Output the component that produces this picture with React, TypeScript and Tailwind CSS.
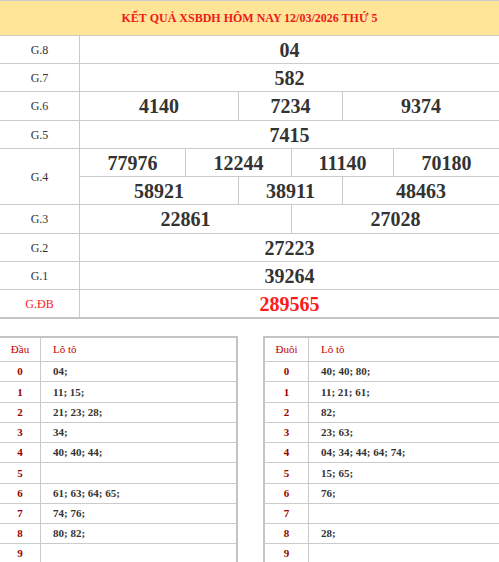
type Cell = { value: string; w: string };

function PrizeRow({
  label,
  rows,
  h,
  special,
}: {
  label: string;
  rows: Cell[][];
  h: string[];
  special?: boolean;
}) {
  return (
    <div className="flex border-b border-[#cbcbcb]">
      <div
        className={`w-[80px] shrink-0 border-r border-[#cbcbcb] flex items-center justify-center text-[12px] ${
          special ? 'text-[#ff1a1a]' : 'text-[#333]'
        }`}
      >
        {label}
      </div>
      <div className="flex-1 flex flex-col">
        {rows.map((cells, ri) => (
          <div
            key={ri}
            className={`flex ${h[ri]} ${
              ri < rows.length - 1 ? 'border-b border-[#cbcbcb]' : ''
            }`}
          >
            {cells.map((c, ci) => (
              <div
                key={ci}
                className={`${c.w} flex items-center justify-center text-[20px] font-bold ${
                  ci < cells.length - 1 ? 'border-r border-[#cbcbcb]' : ''
                } ${special ? 'text-[#ff1a1a]' : 'text-[#333]'}`}
              >
                {c.value}
              </div>
            ))}
          </div>
        ))}
      </div>
    </div>
  );
}

const full = 'flex-1';

function LotoTable({
  title,
  data,
  firstW,
}: {
  title: string;
  data: string[];
  firstW: string;
}) {
  const rowH = [
    'h-[20px]',
    'h-[21px]',
    'h-[20px]',
    'h-[20px]',
    'h-[20px]',
    'h-[21px]',
    'h-[20px]',
    'h-[20px]',
    'h-[20px]',
    'h-[20px]',
  ];
  return (
    <div className="shrink-0 w-[238px] border-t-2 border-r-2 border-[#c4c4c4]">
      <div className="flex h-[24px] border-b border-[#cbcbcb] text-[11px] text-[#c40000]">
        <div className={`${firstW} shrink-0 border-r border-[#cbcbcb] flex items-center justify-center`}>
          {title}
        </div>
        <div className="flex-1 flex items-center pl-[12px]">Lô tô</div>
      </div>
      {data.map((v, i) => (
        <div key={i} className={`flex ${rowH[i]} border-b border-[#cbcbcb] text-[11px] font-bold`}>
          <div
            className={`${firstW} shrink-0 border-r border-[#cbcbcb] flex items-center justify-center text-[#9a0000]`}
          >
            {i}
          </div>
          <div className="flex-1 flex items-center pl-[12px] text-[#333]">{v}</div>
        </div>
      ))}
    </div>
  );
}

export default function App() {
  return (
    <div className="w-[499px] h-[562px] overflow-hidden bg-white [font-family:'Liberation_Serif',serif]">
      <div className="w-[499px] border-t border-[#cbcbcb]">
        <div className="h-[35px] bg-[#ffe597] border-b border-[#cbcbcb] flex items-center justify-center text-[12px] font-bold text-[#f01818]">
          KẾT QUẢ XSBDH HÔM NAY 12/03/2026 THỨ 5
        </div>
        <PrizeRow label="G.8" h={['h-[27px]']} rows={[[{ value: '04', w: full }]]} />
        <PrizeRow label="G.7" h={['h-[27px]']} rows={[[{ value: '582', w: full }]]} />
        <PrizeRow
          label="G.6"
          h={['h-[28px]']}
          rows={[
            [
              { value: '4140', w: 'w-[159px]' },
              { value: '7234', w: 'w-[104px]' },
              { value: '9374', w: 'flex-1' },
            ],
          ]}
        />
        <PrizeRow label="G.5" h={['h-[27px]']} rows={[[{ value: '7415', w: full }]]} />
        <PrizeRow
          label="G.4"
          h={['h-[28px]', 'h-[27px]']}
          rows={[
            [
              { value: '77976', w: 'w-[106px]' },
              { value: '12244', w: 'w-[106px]' },
              { value: '11140', w: 'w-[102px]' },
              { value: '70180', w: 'flex-1' },
            ],
            [
              { value: '58921', w: 'w-[159px]' },
              { value: '38911', w: 'w-[104px]' },
              { value: '48463', w: 'flex-1' },
            ],
          ]}
        />
        <PrizeRow
          label="G.3"
          h={['h-[28px]']}
          rows={[
            [
              { value: '22861', w: 'w-[212px]' },
              { value: '27028', w: 'flex-1' },
            ],
          ]}
        />
        <PrizeRow label="G.2" h={['h-[27px]']} rows={[[{ value: '27223', w: full }]]} />
        <PrizeRow label="G.1" h={['h-[27px]']} rows={[[{ value: '39264', w: full }]]} />
        <div className="border-b-2 border-[#c4c4c4]">
          <div className="flex h-[27px]">
            <div className="w-[80px] shrink-0 border-r border-[#cbcbcb] flex items-center justify-center text-[12px] text-[#ff1a1a]">
              G.ĐB
            </div>
            <div className="flex-1 flex items-center justify-center text-[20px] font-bold text-[#ff1a1a]">
              289565
            </div>
          </div>
        </div>
      </div>

      <div className="flex mt-[17px] gap-[25px]">
        <LotoTable
          title="Đầu"
          firstW="w-[41px]"
          data={[
            '04;',
            '11; 15;',
            '21; 23; 28;',
            '34;',
            '40; 40; 44;',
            '',
            '61; 63; 64; 65;',
            '74; 76;',
            '80; 82;',
            '',
          ]}
        />
        <LotoTable
          title="Đuôi"
          firstW="w-[46px] border-l-2 border-l-[#c4c4c4]"
          data={[
            '40; 40; 80;',
            '11; 21; 61;',
            '82;',
            '23; 63;',
            '04; 34; 44; 64; 74;',
            '15; 65;',
            '76;',
            '',
            '28;',
            '',
          ]}
        />
      </div>
    </div>
  );
}
